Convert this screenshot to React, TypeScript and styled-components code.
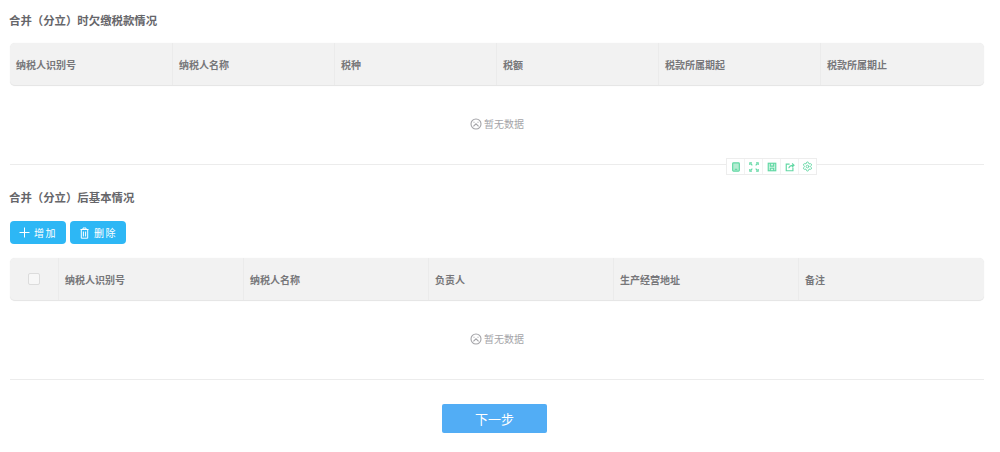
import React from 'react'
import styled, { createGlobalStyle } from 'styled-components'
import { Settings } from 'lucide-react'

const GlobalStyle = createGlobalStyle`
  html, body {
    margin: 0;
    padding: 0;
    background: #fff;
    font-family: "Liberation Sans", "Noto Sans CJK SC", sans-serif;
  }
`

const Page = styled.div`
  position: relative;
  width: 1000px;
  height: 452px;
  box-sizing: border-box;
  padding: 0 16px 0 10px;
  overflow: hidden;
`

const Title = styled.div<{ $top: number; $bottom: number }>`
  height: 16px;
  line-height: 16px;
  margin: ${({ $top }) => $top}px 0 ${({ $bottom }) => $bottom}px -1px;
  font-size: 11.4px;
  font-weight: 700;
  color: #66666a;
`

const Table = styled.div<{ $columns: string }>`
  display: grid;
  grid-template-columns: ${({ $columns }) => $columns};
  height: 43px;
  box-sizing: border-box;
  background: #f2f2f2;
  border-radius: 5px;
  border-bottom: 1px solid #e6e6e6;
  box-shadow: 0 0 1px #e4e4e4;
`

const HeadCell = styled.div`
  display: flex;
  align-items: center;
  padding-left: 6px;
  font-size: 10px;
  font-weight: 700;
  color: #77777a;
  border-left: 1px solid #ebebeb;
  &:first-child {
    border-left: none;
  }
`

const CheckCell = styled(HeadCell)`
  justify-content: center;
  padding-left: 0;
`

const CheckBox = styled.span`
  width: 10px;
  height: 10px;
  background: #f7f7f7;
  border: 1px solid #dcdcdc;
  border-radius: 2px;
`

const Empty = styled.div`
  display: flex;
  align-items: center;
  justify-content: center;
  gap: 2px;
  height: 79px;
  box-sizing: border-box;
  padding-bottom: 3px;
  font-size: 10px;
  color: #a4a4a8;
  border-bottom: 1px solid #ececec;
`

const Actions = styled.div`
  display: flex;
  gap: 4px;
  margin-bottom: 14px;
`

const ActionButton = styled.button`
  display: flex;
  align-items: center;
  justify-content: center;
  gap: 4px;
  width: 56px;
  height: 23px;
  padding: 0;
  background: #2db7f5;
  border: none;
  border-radius: 4px;
  color: #fff;
  font-family: inherit;
  font-size: 10px;
  letter-spacing: 1.5px;
`

const Footer = styled.div`
  display: flex;
  justify-content: center;
  padding: 24px 5px 0 0;
`

const NextButton = styled.button`
  width: 105px;
  height: 29px;
  padding: 0;
  background: #52adf5;
  border: none;
  border-radius: 2px;
  color: #fff;
  font-family: inherit;
  font-size: 13px;
`

const FloatBar = styled.div`
  position: absolute;
  left: 726px;
  top: 158px;
  display: flex;
  height: 17px;
  background: #fff;
  border: 1px solid #ededed;
  box-sizing: border-box;
  width: 91px;
`

const FloatItem = styled.span`
  flex: 1;
  display: flex;
  align-items: center;
  justify-content: center;
  border-left: 1px solid #f2f2f2;
  &:first-child {
    border-left: none;
  }
`

const Glyph = ({ children }: { children: React.ReactNode }) => (
  <svg width="10" height="10" viewBox="0 0 12 12" fill="none" stroke="#62d8a4" strokeWidth="1.4">
    {children}
  </svg>
)

const SadIcon = () => (
  <svg width="12" height="12" viewBox="0 0 12 12" fill="none" stroke="#a4a4a8" strokeWidth="1.1">
    <circle cx="6" cy="6" r="5" />
    <path d="M3.4 8.4 6 5.8l2.6 2.6" />
    <path d="M3.5 4.2h1M7.5 4.2h1" />
  </svg>
)

const EmptyState = () => (
  <Empty>
    <SadIcon />
    暂无数据
  </Empty>
)

const taxColumns = ['纳税人识别号', '纳税人名称', '税种', '税额', '税款所属期起', '税款所属期止']
const baseColumns = ['纳税人识别号', '纳税人名称', '负责人', '生产经营地址', '备注']

export default function App() {
  return (
    <Page>
      <GlobalStyle />
      <Title $top={13} $bottom={14}>合并（分立）时欠缴税款情况</Title>
      <Table $columns="repeat(5, 162px) 1fr">
        {taxColumns.map((name) => (
          <HeadCell key={name}>{name}</HeadCell>
        ))}
      </Table>
      <EmptyState />

      <Title $top={25} $bottom={15}>合并（分立）后基本情况</Title>
      <Actions>
        <ActionButton>
          <svg width="11" height="11" viewBox="0 0 11 11" stroke="#fff" strokeWidth="1">
            <path d="M5.5 0.5v10M0.5 5.5h10" />
          </svg>
          增加
        </ActionButton>
        <ActionButton>
          <svg width="11" height="12" viewBox="0 0 11 12" fill="none" stroke="#fff" strokeWidth="1">
            <path d="M1.5 2.5h8M4 2.5V1h3v1.5M2.3 2.5v8.7h6.4V2.5M4.4 4.5v5M6.6 4.5v5" />
          </svg>
          删除
        </ActionButton>
      </Actions>
      <Table $columns="48px repeat(4, 185px) 1fr">
        <CheckCell>
          <CheckBox />
        </CheckCell>
        {baseColumns.map((name) => (
          <HeadCell key={name}>{name}</HeadCell>
        ))}
      </Table>
      <EmptyState />

      <Footer>
        <NextButton>下一步</NextButton>
      </Footer>

      <FloatBar>
        <FloatItem>
          <Glyph>
            <rect x="2" y="1" width="8" height="10" rx="1" fill="#b5ecd2" />
            <path d="M4.5 8.8h3" />
          </Glyph>
        </FloatItem>
        <FloatItem>
          <Glyph>
            <path d="M4 4L2 2M8 4l2-2M4 8l-2 2M8 8l2 2" />
            <path d="M1 3.5V1h2.5M8.5 1H11v2.5M1 8.5V11h2.5M8.5 11H11V8.5" />
          </Glyph>
        </FloatItem>
        <FloatItem>
          <Glyph>
            <rect x="1.5" y="1.5" width="9" height="9" fill="#d5f5e6" />
            <path d="M4 1.5v3.5h4V1.5M4 10.5V7.5h4v3" />
          </Glyph>
        </FloatItem>
        <FloatItem>
          <Glyph>
            <path d="M5.5 2.5h-4v8h8v-4" />
            <path d="M4.5 7.5c.5-2.5 2.5-3.5 6-3.5M8.5 1.8 10.8 4 8.5 6.2" />
          </Glyph>
        </FloatItem>
        <FloatItem>
          <Settings size={11} color="#62d8a4" strokeWidth={2} />
        </FloatItem>
      </FloatBar>
    </Page>
  )
}
